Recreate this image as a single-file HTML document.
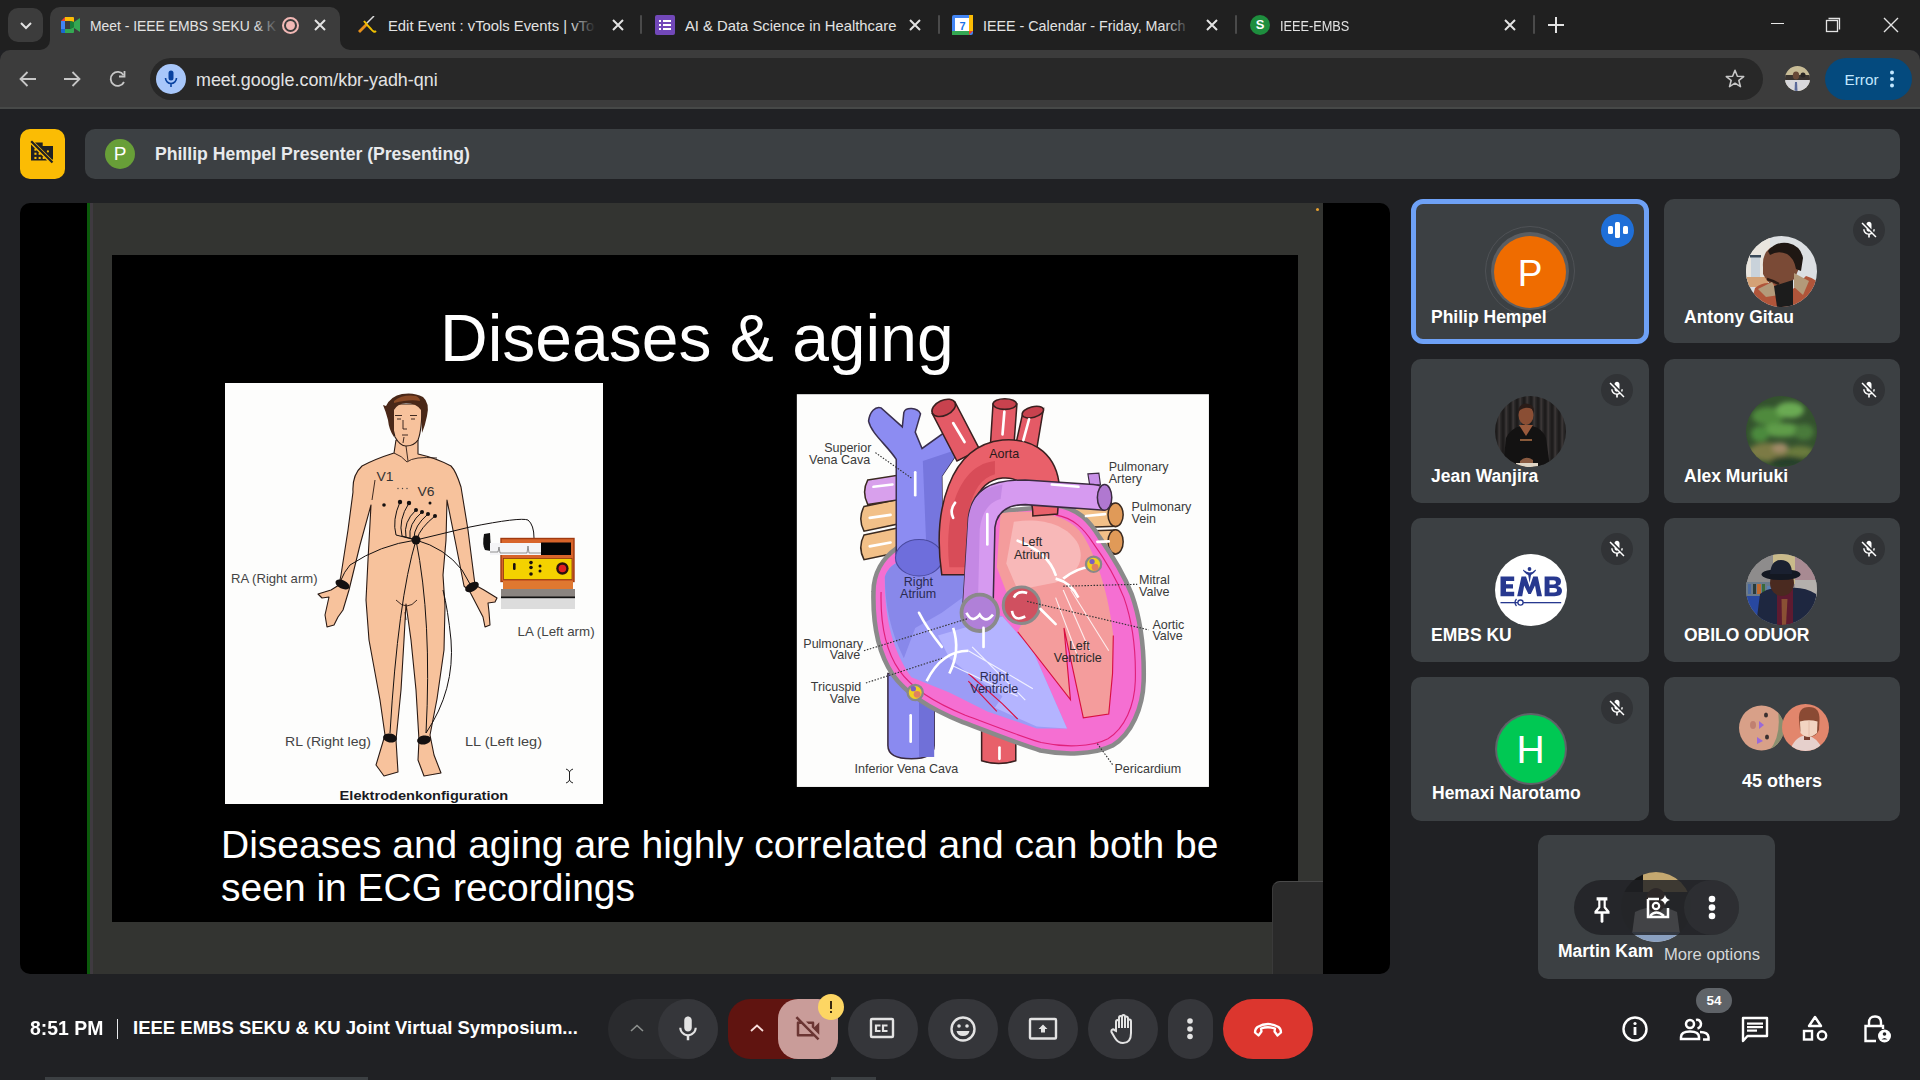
<!DOCTYPE html>
<html><head><meta charset="utf-8">
<style>
*{box-sizing:border-box}
html,body{margin:0;padding:0}
body{width:1920px;height:1080px;position:relative;overflow:hidden;background:#202124;font-family:"Liberation Sans",sans-serif;color:#e3e3e3}
.a{position:absolute}
.tabt{position:absolute;top:17px;font-size:14.8px;color:#e3e3e3;white-space:nowrap;line-height:18px}
.sep{position:absolute;top:15px;width:2px;height:19px;background:#4a4a4a;border-radius:1px}
.tile{position:absolute;background:#3c4043;border-radius:10px;overflow:hidden}
.nm{position:absolute;left:20px;font-weight:700;font-size:17.5px;color:#fff;white-space:nowrap;line-height:20px}
.mute{position:absolute;width:32px;height:32px;border-radius:50%;background:#313336}
.btn{position:absolute;top:999px;height:60px;border-radius:30px;background:#3c4043}
</style></head><body>

<!-- TAB STRIP -->
<div class="a" style="left:0;top:0;width:1920px;height:50px;background:#202020"></div>
<div class="a" style="left:8px;top:8px;width:35px;height:34px;border-radius:10px;background:#3c3c3c"></div>
<svg class="a" style="left:17px;top:17px" width="18" height="16" viewBox="0 0 18 16"><path d="M4 6 L9 11 L14 6" fill="none" stroke="#e3e3e3" stroke-width="2"/></svg>

<!-- active tab -->
<div class="a" style="left:50px;top:7px;width:290px;height:50px;border-radius:10px 10px 0 0;background:#3c3c3c"></div>
<div class="a" style="left:40px;top:40px;width:10px;height:10px;background:#3c3c3c"></div>
<div class="a" style="left:40px;top:40px;width:10px;height:10px;border-radius:0 0 10px 0;background:#202020"></div>
<div class="a" style="left:340px;top:40px;width:10px;height:10px;background:#3c3c3c"></div>
<div class="a" style="left:340px;top:40px;width:10px;height:10px;border-radius:0 0 0 10px;background:#202020"></div>

<!-- Meet icon -->
<svg class="a" style="left:61px;top:17px" width="19" height="16" viewBox="0 0 19 16">
<path d="M0 4 L4 0 L4 4 Z" fill="#ea4335"/>
<rect x="0" y="4" width="4" height="8" fill="#4285f4"/>
<path d="M0 12 L4 12 L4 16 L1 16 Q0 16 0 15Z" fill="#1967d2"/>
<path d="M4 0 L12 0 Q13 0 13 1 L13 5 L9 4 L4 4Z" fill="#fbbc04"/>
<path d="M4 12 L9 12 L13 10 L13 15 Q13 16 12 16 L4 16Z" fill="#34a853"/>
<path d="M9 4 L13 5 L13 10 L9 12Z" fill="#188038"/>
<path d="M13 5 L19 1 L19 15 L13 11Z" fill="#34a853"/>
</svg>
<div class="tabt" style="left:90px;width:190px;overflow:hidden;font-size:13.9px">Meet - IEEE EMBS SEKU &amp; K</div>
<div class="a" style="left:255px;top:10px;width:30px;height:30px;background:linear-gradient(90deg,rgba(60,60,60,0),#3c3c3c 80%)"></div>
<div class="a" style="left:282px;top:17px;width:17px;height:17px;border-radius:50%;border:2px solid #f2b8b5"></div>
<div class="a" style="left:286px;top:21px;width:9px;height:9px;border-radius:50%;background:#f2b8b5"></div>
<svg class="a" style="left:313px;top:18px" width="14" height="14" viewBox="0 0 14 14"><path d="M2 2 L12 12 M12 2 L2 12" stroke="#e3e3e3" stroke-width="2"/></svg>

<!-- tab 2 -->
<svg class="a" style="left:357px;top:16px" width="21" height="19" viewBox="0 0 21 19">
<path d="M1 15 L9 7 L11 9 L3 17 Z" fill="#e8901a"/>
<path d="M9 8 L17 0" stroke="#ddd" stroke-width="1.5"/>
<path d="M7 5 Q10 9 14 13 Q17 17 19 15" fill="none" stroke="#f0c000" stroke-width="2"/>
</svg>
<div class="tabt" style="left:388px;width:208px;overflow:hidden">Edit Event : vTools Events | vTools</div>
<div class="a" style="left:570px;top:10px;width:30px;height:30px;background:linear-gradient(90deg,rgba(32,32,32,0),#202020 85%)"></div>
<svg class="a" style="left:611px;top:18px" width="14" height="14" viewBox="0 0 14 14"><path d="M2 2 L12 12 M12 2 L2 12" stroke="#e3e3e3" stroke-width="2"/></svg>
<div class="sep" style="left:640px"></div>

<!-- tab 3 -->
<div class="a" style="left:655px;top:15px;width:20px;height:20px;border-radius:2px;background:#7248b9"></div>
<svg class="a" style="left:658px;top:18px" width="14" height="14" viewBox="0 0 14 14"><g fill="#fff"><rect x="1" y="2" width="2" height="2"/><rect x="5" y="2" width="8" height="2"/><rect x="1" y="6" width="2" height="2"/><rect x="5" y="6" width="8" height="2"/><rect x="1" y="10" width="2" height="2"/><rect x="5" y="10" width="8" height="2"/></g></svg>
<div class="tabt" style="left:685px">AI &amp; Data Science in Healthcare</div>
<svg class="a" style="left:908px;top:18px" width="14" height="14" viewBox="0 0 14 14"><path d="M2 2 L12 12 M12 2 L2 12" stroke="#e3e3e3" stroke-width="2"/></svg>
<div class="sep" style="left:938px"></div>

<!-- tab 4 -->
<svg class="a" style="left:952px;top:15px" width="21" height="20" viewBox="0 0 21 20">
<rect x="0" y="0" width="21" height="20" rx="2" fill="#4285f4"/>
<rect x="3" y="3" width="15" height="14" fill="#fff"/>
<rect x="0" y="16" width="18" height="4" fill="#34a853"/>
<rect x="17" y="0" width="4" height="16" fill="#fbbc04"/>
<path d="M17 16 L21 16 L17 20Z" fill="#ea4335"/>
<text x="10.5" y="14.5" font-family="Liberation Sans" font-size="11" fill="#1a73e8" text-anchor="middle" font-weight="700">7</text>
</svg>
<div class="tabt" style="left:983px;width:212px;overflow:hidden;font-size:14.3px">IEEE - Calendar - Friday, March 15</div>
<div class="a" style="left:1165px;top:10px;width:30px;height:30px;background:linear-gradient(90deg,rgba(32,32,32,0),#202020 85%)"></div>
<svg class="a" style="left:1205px;top:18px" width="14" height="14" viewBox="0 0 14 14"><path d="M2 2 L12 12 M12 2 L2 12" stroke="#e3e3e3" stroke-width="2"/></svg>
<div class="sep" style="left:1235px"></div>

<!-- tab 5 -->
<div class="a" style="left:1250px;top:15px;width:20px;height:20px;border-radius:50%;background:#1e8e3e;color:#fff;font-weight:700;font-size:13px;line-height:20px;text-align:center">S</div>
<div class="tabt" style="left:1280px;font-size:14.8px;transform:scaleX(0.86);transform-origin:0 0">IEEE-EMBS</div>
<svg class="a" style="left:1503px;top:18px" width="14" height="14" viewBox="0 0 14 14"><path d="M2 2 L12 12 M12 2 L2 12" stroke="#e3e3e3" stroke-width="2"/></svg>
<div class="sep" style="left:1533px"></div>
<svg class="a" style="left:1547px;top:16px" width="18" height="18" viewBox="0 0 18 18"><path d="M9 1 V17 M1 9 H17" stroke="#e3e3e3" stroke-width="2"/></svg>

<!-- window controls -->
<div class="a" style="left:1771px;top:23px;width:13px;height:1px;background:#e8e8e8"></div>
<svg class="a" style="left:1825px;top:17px" width="16" height="16" viewBox="0 0 16 16"><path d="M3.5 1.5 H14.5 V12.5" fill="none" stroke="#e3e3e3" stroke-width="1.3"/><rect x="1.5" y="3.5" width="11" height="11" fill="none" stroke="#e3e3e3" stroke-width="1.3"/></svg>
<svg class="a" style="left:1882px;top:16px" width="18" height="18" viewBox="0 0 18 18"><path d="M2 2 L16 16 M16 2 L2 16" stroke="#e3e3e3" stroke-width="1.4"/></svg>

<!-- TOOLBAR -->
<div class="a" style="left:0;top:50px;width:1920px;height:59px;background:#3c3c3c;border-radius:10px 10px 0 0"></div>
<div class="a" style="left:0;top:107px;width:1920px;height:2px;background:#474948"></div>
<svg class="a" style="left:18px;top:69px" width="20" height="20" viewBox="0 0 20 20"><path d="M18 10 H3 M9.5 3 L2.5 10 L9.5 17" fill="none" stroke="#c7c7c7" stroke-width="1.8"/></svg>
<svg class="a" style="left:62px;top:69px" width="20" height="20" viewBox="0 0 20 20"><path d="M2 10 H17 M10.5 3 L17.5 10 L10.5 17" fill="none" stroke="#c7c7c7" stroke-width="1.8"/></svg>
<svg class="a" style="left:108px;top:70px" width="20" height="18" viewBox="0 0 20 18"><path d="M15.5 5 A7 7 0 1 0 16 12" fill="none" stroke="#c7c7c7" stroke-width="1.8"/><path d="M16.5 1 V6.5 H11" fill="none" stroke="#c7c7c7" stroke-width="1.8"/></svg>

<div class="a" style="left:150px;top:58px;width:1613px;height:42px;border-radius:21px;background:#282828"></div>
<div class="a" style="left:156px;top:64px;width:30px;height:30px;border-radius:50%;background:#a8c7fa"></div>
<svg class="a" style="left:162px;top:69px" width="18" height="20" viewBox="0 0 18 20"><rect x="6.5" y="1.5" width="5" height="10" rx="2.5" fill="#0842a0"/><path d="M3.5 9 A5.5 5.5 0 0 0 14.5 9 M9 14.5 V18" fill="none" stroke="#0842a0" stroke-width="1.6"/></svg>
<div class="a" style="left:196px;top:69.5px;font-size:17.9px;color:#e3e3e3;white-space:nowrap;line-height:20px">meet.google.com/kbr-yadh-qni</div>
<svg class="a" style="left:1724px;top:68px" width="22" height="22" viewBox="0 0 24 24"><path d="M12 2.5 L14.6 9 L21.5 9.3 L16.2 13.6 L18 20.4 L12 16.6 L6 20.4 L7.8 13.6 L2.5 9.3 L9.4 9 Z" fill="none" stroke="#c7c7c7" stroke-width="1.7" stroke-linejoin="round"/></svg>
<svg class="a" style="left:1785px;top:66px" width="25" height="25" viewBox="0 0 25 25"><defs><clipPath id="pa"><circle cx="12.5" cy="12.5" r="12.5"/></clipPath></defs><g clip-path="url(#pa)"><rect width="25" height="25" fill="#c8bc96"/><rect x="0" y="9" width="25" height="6" fill="#3a3430"/><rect x="0" y="14" width="25" height="11" fill="#d8d8dc"/><ellipse cx="11" cy="9.5" rx="3.2" ry="4" fill="#6a4a38"/><path d="M10,16 L12,16 L12.5,25 L9.5,25Z" fill="#5a6a9a"/><circle cx="18" cy="9" r="2.5" fill="#2a2624"/></g></svg>
<div class="a" style="left:1825px;top:58px;width:87px;height:42px;border-radius:21px;background:#044a7e"></div>
<div class="a" style="left:1844.5px;top:70px;font-size:15.3px;color:#c2e7ff;line-height:20px">Error</div>
<svg class="a" style="left:1887.5px;top:69px" width="8" height="20" viewBox="0 0 8 20"><circle cx="4" cy="3.5" r="2" fill="#c2e7ff"/><circle cx="4" cy="10" r="2" fill="#c2e7ff"/><circle cx="4" cy="16.5" r="2" fill="#c2e7ff"/></svg>

<!-- MEET TOP BAR -->
<div class="a" style="left:20px;top:129px;width:45px;height:50px;border-radius:10px;background:#fbbc04"></div>
<svg class="a" style="left:30px;top:140px" width="24" height="24" viewBox="0 0 24 24"><path d="M1,4.5 L1,20.5 L17,20.5Z" fill="#202124"/><path d="M5,2.5 L12.7,2.5 L12.7,6 L23,6 L23,19.5 L22,19.5Z" fill="#202124"/><path d="M1.2,1.2 L22.5,22.5" stroke="#202124" stroke-width="2.2"/><g fill="#fbbc04"><rect x="4.4" y="8.6" width="2.1" height="2.1"/><rect x="4.4" y="12.7" width="2.1" height="2.1"/><rect x="8.6" y="12.7" width="2.1" height="2.1"/><rect x="4.4" y="16.9" width="2.1" height="2.1"/><rect x="8.6" y="16.9" width="2.1" height="2.1"/><rect x="12.7" y="16.9" width="2.1" height="2.1"/><circle cx="17.9" cy="11.4" r="1.1"/></g></svg>
<div class="a" style="left:85px;top:129px;width:1815px;height:50px;border-radius:10px;background:#3c4043"></div>
<div class="a" style="left:105px;top:139px;width:30px;height:30px;border-radius:50%;background:#689f38;color:#fff;font-size:19px;line-height:30px;text-align:center">P</div>
<div class="a" style="left:155px;top:144px;font-size:17.6px;font-weight:700;color:#e8eaed;white-space:nowrap;line-height:20px">Phillip Hempel Presenter (Presenting)</div>

<!-- VIDEO AREA -->
<div class="a" id="video" style="left:20px;top:203px;width:1370px;height:771px;border-radius:10px;background:#000;overflow:hidden">
  <div class="a" style="left:67px;top:0;width:3px;height:771px;background:#0b5a0b"></div>
  <div class="a" style="left:70px;top:0;width:3px;height:771px;background:#3f3a40"></div>
  <div class="a" style="left:73px;top:0;width:1230px;height:771px;background:#333431"></div>
  <div class="a" style="left:1296px;top:5px;width:3px;height:3px;border-radius:50%;background:#e8a030"></div>
  <!-- slide -->
  <div class="a" id="slide" style="left:92px;top:52px;width:1186px;height:667px;background:#000"></div>
  <div class="a" style="left:1252px;top:678px;width:51px;height:93px;border-radius:8px 0 0 0;background:#2a2a2a;border-top:1px solid #4a4a4a;border-left:1px solid #3a3a3a"></div>
</div>

<!-- slide content (absolute page coords) -->
<div class="a" style="left:440px;top:298px;font-size:66px;color:#fff;white-space:nowrap;line-height:80px">Diseases &amp; aging</div>
<div class="a" style="left:221px;top:823px;font-size:39px;color:#fff;white-space:nowrap;line-height:43px">Diseases and aging are highly correlated and can both be<br>seen in ECG recordings</div>

<svg class="a" style="left:225px;top:383px" width="378" height="421" viewBox="225 383 378 421">
<rect x="225" y="383" width="378" height="421" fill="#fdfdfc"/>
<g stroke="#2a1a14" stroke-width="1.1" stroke-linejoin="round">
<path fill="#f7c29c" d="M396,440 L394,453 Q375,459 362,466 Q352,475 353,492 L348,530 L341,575 L339,585 L331,590 L318,594 L322,598 L329,597 L325,615 L327,627 L334,625 L338,617 L343,610 L349,590 L360,545 L371,505 L368,560 L366,600 L369,640 L380,700 L385,735 L376,765 L384,776 L398,772 L396,740 L401,690 L404,640 L406,604 L411,640 L416,690 L419,740 L418,760 L424,776 L441,773 L434,755 L430,735 L437,699 L444,650 L445,606 L443,575 L446,540 L447,500 L455,540 L464,586 L470,592 L483,617 L485,627 L490,625 L489,612 L488,603 L495,602 L497,598 L484,590 L475,585 L468,530 L461,487 Q456,471 451,466 Q436,458 418,454 L418,440 Z"/>
<path fill="#f7c29c" d="M393,404 Q391,425 395,437 Q400,446 406,446 Q414,446 418,440 Q422,430 422,404 Z"/>
</g>
<path fill="#4a2818" d="M386,406 Q391,396 402,394 Q414,392 423,397 Q430,403 427,416 Q425,426 422,433 L421,410 Q416,403 406,403 Q397,404 394,410 L394,437 Q389,430 388,420 Q386,412 383,405Z"/><path fill="#8a4a26" d="M394,401 Q403,394 416,396 Q420,398 420,401 Q410,399 394,403Z"/>
<g stroke="#2a1a14" stroke-width="0.9" fill="none">
<path d="M395,415.5 L402,415.5 M410,415.5 L417,415.5 M397,419 L401,419 M411,419 L415,419 M403,420 L403,429 L407,429 M402,435 L408,435 M404,437 L403,443"/>
<path d="M394,453 Q402,456 407,462 Q414,456 437,458 M406,446 L408,461"/>
<path d="M396,600 Q407,612 417,600 M405,612 L406,620"/>
<path d="M375,480 L372,500"/>
</g>
<g fill="#141010">
<ellipse cx="342.5" cy="584.5" rx="7.5" ry="4.2" transform="rotate(25 342.5 584.5)"/>
<ellipse cx="472" cy="587" rx="7.5" ry="4.2" transform="rotate(-30 472 587)"/>
<ellipse cx="390" cy="738" rx="7" ry="4.5" transform="rotate(10 390 738)"/>
<ellipse cx="424" cy="740" rx="7" ry="4.5" transform="rotate(-10 424 740)"/>
<circle cx="416" cy="540" r="4.5"/>
<circle cx="384" cy="505" r="1.8"/><circle cx="400" cy="502" r="2.2"/><circle cx="409" cy="503" r="2.2"/>
<circle cx="416" cy="510" r="2"/><circle cx="422" cy="512" r="2"/><circle cx="428" cy="514" r="2"/><circle cx="435" cy="516" r="2"/><circle cx="430" cy="503" r="1.5"/>
</g>
<g stroke="#141010" stroke-width="1" fill="none">
<path d="M400,502 Q392,520 396,535 L416,540"/>
<path d="M409,503 Q398,520 402,536 L416,540"/>
<path d="M416,510 Q403,522 406,537"/>
<path d="M422,512 Q408,524 410,538"/>
<path d="M428,514 Q414,526 414,538"/>
<path d="M435,516 Q420,528 417,539"/>
<path d="M416,540 Q380,545 350,565 Q344,572 341,580"/>
<path d="M416,540 Q445,548 462,570 L470,584"/>
<path d="M416,540 Q398,600 390,733"/>
<path d="M416,540 Q432,620 426,733"/>
<path d="M416,540 L470,527 Q520,517 528,520 Q534,525 534,538"/>
<path d="M426,733 Q455,690 451,640 Q448,610 443,590"/>
</g>
<path d="M484,534 L490,533 L491,551 L485,550 Q482,545 484,534Z" fill="#111"/>
<rect x="501" y="538.5" width="73" height="43" fill="#d8642a" stroke="#a03a10" stroke-width="1.4"/>
<rect x="490" y="543" width="51" height="12" fill="#f4f4f6"/>
<path d="M490,552 L498,552 L499,547 L500,553 L520,553 L527,553 L528,546 L529,553 L541,553" stroke="#666" stroke-width="0.7" fill="none"/>
<rect x="541" y="542.5" width="30" height="12.5" fill="#050505"/>
<rect x="503.5" y="558.5" width="68.5" height="21" fill="#f4d200" stroke="#8a3a10" stroke-width="0.8"/>
<rect x="503" y="581" width="70" height="9" fill="#e07830"/>
<rect x="501" y="589" width="74" height="8" fill="#8a8480"/>
<rect x="501" y="596.5" width="74" height="2" fill="#111"/>
<rect x="501" y="598.5" width="74" height="10.5" fill="#dcdcdc"/>
<g fill="#1a1010"><circle cx="531" cy="562.6" r="1.8"/><circle cx="531" cy="567.5" r="1.8"/><circle cx="531" cy="574" r="1.8"/><circle cx="540" cy="566" r="1.5"/><circle cx="540" cy="571" r="1.5"/><rect x="513" y="563" width="2.6" height="7" rx="1.2"/></g>
<circle cx="562.4" cy="568.5" r="6.2" fill="#2a1010"/><circle cx="562.4" cy="568.5" r="3.8" fill="#e02020"/>
<g font-family="Liberation Sans" fill="#444" font-size="12.4">
<text x="231" y="582.5" textLength="86.5" lengthAdjust="spacingAndGlyphs">RA (Right arm)</text>
<text x="285" y="746.3" textLength="86" lengthAdjust="spacingAndGlyphs">RL (Right leg)</text>
<text x="517.6" y="636.4" textLength="77" lengthAdjust="spacingAndGlyphs">LA (Left arm)</text>
<text x="465" y="746.3" textLength="77" lengthAdjust="spacingAndGlyphs">LL (Left leg)</text>
</g>
<text x="339.6" y="799.6" font-family="Liberation Sans" font-weight="700" font-size="12.6" fill="#1a1a22" textLength="168.7" lengthAdjust="spacingAndGlyphs">Elektrodenkonfiguration</text>
<g font-family="Liberation Sans" fill="#333" font-size="13">
<text x="376.5" y="481" textLength="17" lengthAdjust="spacingAndGlyphs">V1</text>
<text x="417.5" y="496" textLength="17" lengthAdjust="spacingAndGlyphs">V6</text>
</g>
<g fill="#444"><circle cx="398" cy="488.5" r="0.7"/><circle cx="402.5" cy="488.5" r="0.7"/><circle cx="407" cy="488.5" r="0.7"/></g>
<path d="M566,769 Q569,770 569.5,772 Q570,770 573,769 M569.5,772 V780 M566,783 Q569,782 569.5,780 Q570,782 573,783" stroke="#222" stroke-width="1" fill="none"/>
</svg>

<svg class="a" style="left:790px;top:385px" width="425" height="410" viewBox="0 0 1120 1080">
<rect x="18" y="24" width="1086" height="1035" fill="#fdfdfc"/>
<g stroke="#3a2a20" stroke-width="4">
<path d="M195,320 L290,300 L290,365 L195,385 Q178,352 195,320Z" fill="#f2c088"/>
<path d="M195,395 L290,375 L290,440 L195,460 Q178,428 195,395Z" fill="#f2c088"/>
<path d="M205,250 L300,235 L300,300 L205,315 Q188,282 205,250Z" fill="#d8a0ec"/>
<path d="M700,318 L858,312 L858,372 L700,378Z" fill="#f2c088"/>
<ellipse cx="858" cy="342" rx="20" ry="31" fill="#e09a58"/>
<path d="M760,385 L858,382 L858,445 L760,450Z" fill="#f2c088"/>
<ellipse cx="858" cy="413" rx="20" ry="32" fill="#e09a58"/>
</g>
<path d="M258,760 L380,760 L380,950 Q380,985 320,985 Q258,985 258,950Z" fill="#8a8af0" stroke="#3a2a40" stroke-width="4"/>
<rect x="340" y="760" width="40" height="220" fill="#7070d8"/>
<path d="M505,880 L595,880 L595,990 Q550,1005 505,990Z" fill="#e8606a" stroke="#3a2020" stroke-width="4"/>
<!-- heart body -->
<path d="M281,430 C245,455 220,495 220,545 C218,630 232,705 270,762 C310,820 390,862 455,888 C520,912 600,945 660,963 C720,975 800,975 850,950 C900,920 930,850 932,780 C934,700 925,620 900,550 C880,500 850,450 815,400 C790,360 760,325 705,318 L560,332 C500,342 470,380 455,420 Z" fill="#f56fd2" stroke="#8a8a8a" stroke-width="12"/>
<path d="M240,545 C238,625 252,700 288,752 C325,805 400,845 462,870 C525,893 605,925 662,942 C720,955 795,955 838,932 C882,905 908,845 910,780 C912,700 903,625 880,560 C860,510 832,462 798,415 C775,380 748,350 700,342" fill="none" stroke="#e0207a" stroke-width="3"/>
<!-- blue right atrium/ventricle -->
<path d="M250,505 C265,460 320,445 420,445 L470,460 L470,575 L560,610 L640,700 L730,905 L650,905 L520,860 L420,810 L320,770 C270,700 248,610 250,505Z" fill="#9c9cf6"/>
<path d="M250,505 C265,460 320,445 420,445 L460,455 L455,560 L400,600 L330,640 L300,720 C265,650 250,580 250,505Z" fill="#8888ea"/>
<path d="M390,660 L560,610 L640,700 L730,905 L650,900 L540,850 L560,820 L470,760 L420,720Z" fill="#b4b4ff"/>
<!-- salmon left chambers -->
<path d="M555,338 C650,325 740,340 775,400 C810,460 840,550 852,660 L850,760 L840,867 L773,877 L722,640 L739,829 L600,650 L625,600 L580,570 L545,480 Z" fill="#f49c9c"/>
<path d="M590,360 C660,350 730,365 760,420 C780,470 750,500 700,520 L600,540 L570,470Z" fill="#f8b8b8"/>
<g stroke="#d81040" stroke-width="3" fill="none">
<path d="M600,650 L739,829 L722,640 L773,877 L840,867 L850,760 L852,660"/>
<path d="M545,860 L470,780"/>
<path d="M470,760 L560,840 L600,880"/>
</g>
<!-- SVC -->
<path d="M207,95 C210,70 225,55 240,60 L296,110 L300,72 C305,58 335,58 344,76 L330,124 L348,167 L425,112 C445,115 465,125 468,138 L449,167 L400,240 L402,445 L280,445 L280,196 C258,160 215,130 207,95Z" fill="#8c8cf2" stroke="#3a3050" stroke-width="4"/>
<path d="M350,200 L449,167 L400,240 L402,445 L360,445Z" fill="#7676de"/>
<ellipse cx="340" cy="455" rx="62" ry="48" fill="#6e6edc" stroke="#4a4aa0" stroke-width="3"/>
<!-- aorta -->
<g stroke="#3a2020" stroke-width="4">
<path d="M375,75 L435,45 L500,170 L440,200Z" fill="#e45a66"/>
<ellipse cx="405" cy="60" rx="33" ry="20" transform="rotate(-25 405 60)" fill="#c8424e"/>
<path d="M535,50 L598,50 L590,160 L528,160Z" fill="#e45a66"/>
<ellipse cx="566" cy="50" rx="31" ry="14" fill="#c8424e"/>
<path d="M612,80 L668,62 L650,170 L592,170Z" fill="#e45a66"/>
<ellipse cx="640" cy="71" rx="29" ry="14" transform="rotate(-15 640 71)" fill="#c8424e"/>
<path d="M400,500 C375,330 420,160 560,145 C650,138 705,190 710,270 L705,340 L640,345 C640,280 610,240 560,245 C490,252 460,330 468,500Z" fill="#e9606a"/>
</g>
<path d="M420,480 C405,350 440,210 540,200 L540,235 C480,250 455,340 468,480Z" fill="#d84c58"/>
<!-- pulmonary artery -->
<path d="M785,234 L814,232 L818,262 L790,265Z" fill="#c890e8" stroke="#3a2a40" stroke-width="3"/>
<path d="M455,595 L470,350 C480,275 525,250 620,250 L800,262 C820,264 830,270 832,280 L829,330 L620,315 C570,315 545,335 540,375 L535,595Z" fill="#d69af0" stroke="#3a2a40" stroke-width="4"/>
<path d="M470,350 C480,290 510,270 560,262 L555,300 C520,310 505,340 500,380 L495,590 L455,595Z" fill="#c488e4"/>
<ellipse cx="829" cy="296" rx="19" ry="34" fill="#b078d0" stroke="#3a2a40" stroke-width="4"/>
<!-- valves -->
<circle cx="500" cy="600" r="48" fill="#b080d8" stroke="#8a8a8a" stroke-width="10"/>
<circle cx="610" cy="580" r="48" fill="#d05060" stroke="#8a8a8a" stroke-width="8"/>
<g stroke="#fff" stroke-width="7" fill="none">
<path d="M465,600 Q480,630 500,605 Q515,630 535,605"/>
<path d="M590,560 Q600,540 625,548 M585,595 Q590,625 620,610"/>
<path d="M430,640 Q450,700 420,760 M360,780 Q400,700 470,700"/>
<path d="M700,510 Q740,520 760,560 M720,510 Q760,480 790,480"/>
</g>
<g stroke="#fff" stroke-width="3" opacity="0.8">
<path d="M470,700 L640,800 M480,690 L620,830 M430,740 L600,820"/>
<path d="M720,540 L790,700 M740,540 L840,700 M700,560 L760,720"/>
</g>
<g stroke="#fff" stroke-width="7" fill="none" stroke-linecap="round">
<path d="M330,230 L330,290"/><path d="M435,310 Q420,330 430,350"/>
<path d="M520,340 L520,420"/><path d="M510,640 L510,690"/><path d="M318,870 L318,940"/>
<path d="M690,262 L760,268"/><path d="M220,268 L270,262"/><path d="M210,350 L265,342"/><path d="M210,425 L265,415"/>
<path d="M780,345 L830,340"/><path d="M810,413 L840,412"/>
<path d="M430,100 L460,150"/><path d="M565,70 L560,130"/><path d="M630,90 L615,145"/>
<path d="M340,600 Q360,640 400,690"/><path d="M600,410 Q680,440 700,500"/><path d="M660,590 L700,630"/>
<path d="M552,985 L552,955"/>
</g>
<circle cx="330" cy="810" r="20" fill="#f0d020" stroke="#888" stroke-width="6"/><circle cx="335" cy="815" r="9" fill="#e08060"/><circle cx="325" cy="800" r="7" fill="#7a60c0"/>
<circle cx="800" cy="472" r="20" fill="#f0d020" stroke="#888" stroke-width="6"/><circle cx="804" cy="480" r="9" fill="#e08060"/><circle cx="796" cy="465" r="7" fill="#7a60c0"/>
<g stroke="#333" stroke-width="3" stroke-dasharray="4 4" fill="none">
<path d="M225,178 L320,245"/><path d="M195,700 L470,615"/><path d="M200,785 L400,720"/>
<path d="M720,530 L915,525"/><path d="M625,570 L945,645"/><path d="M810,945 L850,1000"/>
</g>
<g font-family="Liberation Sans" font-size="33" fill="#3a3a3a">
<text x="90" y="176">Superior</text><text x="50" y="208">Vena Cava</text>
<text x="525" y="193" fill="#2a1a1a">Aorta</text>
<text x="840" y="226">Pulmonary</text><text x="840" y="258">Artery</text>
<text x="900" y="332">Pulmonary</text><text x="900" y="364">Vein</text>
<text x="610" y="425" fill="#2a2a2a">Left</text><text x="590" y="459" fill="#2a2a2a">Atrium</text>
<text x="300" y="530" fill="#2a2a50">Right</text><text x="290" y="562" fill="#2a2a50">Atrium</text>
<text x="920" y="523">Mitral</text><text x="920" y="555">Valve</text>
<text x="955" y="642">Aortic</text><text x="955" y="673">Valve</text>
<text x="35" y="692">Pulmonary</text><text x="105" y="723">Valve</text>
<text x="735" y="698" fill="#2a2a2a">Left</text><text x="695" y="730" fill="#2a2a2a">Ventricle</text>
<text x="55" y="807">Tricuspid</text><text x="105" y="838">Valve</text>
<text x="500" y="780" fill="#2a2a50">Right</text><text x="475" y="812" fill="#2a2a50">Ventricle</text>
<text x="170" y="1022">Inferior Vena Cava</text>
<text x="855" y="1022">Pericardium</text>
</g>
</svg>


<!-- PARTICIPANTS -->

<!-- Tile 1 Philip -->
<div class="tile" style="left:1411px;top:199px;width:238px;height:145px;border:5px solid #6ea1f6;border-radius:12px"></div>
<div class="a" style="left:1485px;top:226px;width:90px;height:90px;border-radius:50%;border:1px solid #4f5256"></div>
<div class="a" style="left:1491px;top:232px;width:78px;height:78px;border-radius:50%;background:#5a5d61"></div>
<div class="a" style="left:1494px;top:235.5px;width:72px;height:72px;border-radius:50%;background:#ef6c00;color:#fff;font-size:37px;line-height:76px;text-align:center">P</div>
<div class="a" style="left:1601px;top:214px;width:33px;height:33px;border-radius:50%;background:#1f6fd8"></div>
<div class="a" style="left:1608px;top:226px;width:5px;height:8px;border-radius:1.5px;background:#fff"></div>
<div class="a" style="left:1615px;top:222px;width:5px;height:16px;border-radius:1.5px;background:#fff"></div>
<div class="a" style="left:1623px;top:226px;width:5px;height:8px;border-radius:1.5px;background:#fff"></div>
<div class="nm" style="left:1431px;top:307.0px">Philip Hempel</div>

<!-- Tile 2 Antony -->
<div class="tile" style="left:1664px;top:199px;width:236px;height:144px"></div>
<svg class="a" style="left:1746px;top:235.5px" width="71" height="71" viewBox="0 0 71 71">
<defs><clipPath id="c1"><circle cx="35.5" cy="35.5" r="35.5"/></clipPath></defs>
<g clip-path="url(#c1)">
<rect width="71" height="71" fill="#dcdfe2"/>
<rect x="0" y="0" width="24" height="46" fill="#e9e5de"/>
<rect x="5" y="20" width="9" height="23" fill="#c9d2da"/>
<rect x="4" y="19" width="11" height="2.5" fill="#3a4a5a"/>
<rect x="0" y="41" width="22" height="10" fill="#d4a276"/>
<path d="M17,31 Q16,18 24,12 Q34,7 46,12 Q55,18 54,30 L51,37 Q48,46 40,50 Q30,53 24,48 Q19,42 17,38 Z" fill="#7a4a36"/>
<path d="M22,15 Q30,5 42,7 Q55,10 57,22 L55,35 L50,33 Q48,22 41,18 Q32,14 24,19 Z" fill="#1f1713"/>
<path d="M21,43 Q28,45 33,48" stroke="#2a1a14" stroke-width="2.5" fill="none"/>
<path d="M4,71 L9,52 Q18,45 28,48 L44,56 L60,40 Q68,42 74,48 L74,71 Z" fill="#b0553a"/>
<path d="M12,53 L26,46 L33,59 L20,61Z" fill="#b39a7a"/>
<path d="M48,37 L63,45 L57,59 L48,51Z" fill="#b39a7a"/>
<path d="M28,50 L47,44 L47,71 L31,71Z" fill="#1c1c1c"/>
</g></svg>
<div class="mute" style="left:1853px;top:214px"></div>
<svg class="a" style="left:1859px;top:220px" width="20" height="20" viewBox="0 0 24 24"><path fill="#fff" d="M19 11h-1.7c0 .74-.16 1.43-.43 2.05l1.23 1.23c.56-.98.9-2.09.9-3.28zm-4.02.17c0-.06.02-.11.02-.17V5c0-1.66-1.34-3-3-3S9 3.34 9 5v.18l5.98 5.99zM4.27 3L3 4.27l6.01 6.01V11c0 1.66 1.33 3 2.99 3 .22 0 .44-.03.65-.08l1.66 1.66c-.71.33-1.5.52-2.31.52-2.76 0-5.3-2.1-5.3-5.1H5c0 3.41 2.72 6.23 6 6.72V21h2v-3.28c.91-.13 1.77-.45 2.54-.9L19.73 21 21 19.730z"/></svg>
<div class="nm" style="left:1684px;top:307.0px">Antony Gitau</div>

<!-- Tile 3 Jean -->
<div class="tile" style="left:1411px;top:359px;width:238px;height:144px"></div>
<svg class="a" style="left:1494.5px;top:395.5px" width="71" height="71" viewBox="0 0 71 71">
<defs><clipPath id="c2"><circle cx="35.5" cy="35.5" r="35.5"/></clipPath>
<pattern id="cur" width="7" height="71" patternUnits="userSpaceOnUse"><rect width="7" height="71" fill="#1e1c1c"/><rect x="3" width="2.5" height="71" fill="#3a3535"/><rect x="2.5" width="1" height="71" fill="#2c2a2a"/><rect x="5.5" width="1" height="71" fill="#2c2a2a"/></pattern></defs>
<g clip-path="url(#c2)">
<rect width="71" height="71" fill="url(#cur)"/>
<path d="M8,71 L11,42 Q16,32 26,30 L37,30 Q47,32 51,42 L55,71Z" fill="#131212"/>
<path d="M24,29 L38,29 L31,40Z" fill="#9a5a3c"/>
<ellipse cx="31" cy="19" rx="7.5" ry="10" fill="#8a4e34"/>
<path d="M23,17 Q23,8 31,7.5 Q40,8 39,17 L37,13 Q31,10 25,14Z" fill="#2a1c18"/>
<rect x="25" y="43" width="12" height="2" fill="#8a5a3a"/>
<path d="M25,65 Q31,59 38,64 L38,71 L25,71Z" fill="#8a5a40"/>
<rect x="21" y="67" width="22" height="4" fill="#e0d6c6"/>
</g></svg>
<div class="mute" style="left:1601px;top:374px"></div>
<svg class="a" style="left:1607px;top:380px" width="20" height="20" viewBox="0 0 24 24"><path fill="#fff" d="M19 11h-1.7c0 .74-.16 1.43-.43 2.05l1.23 1.230c.56-.98.9-2.09.9-3.28zm-4.02.17c0-.06.02-.11.02-.17V5c0-1.66-1.34-3-3-3S9 3.34 9 5v.18l5.98 5.99zM4.27 3L3 4.27l6.01 6.01V11c0 1.66 1.33 3 2.99 3 .22 0 .44-.03.65-.08l1.66 1.66c-.71.33-1.5.52-2.31.52-2.76 0-5.3-2.1-5.3-5.1H5c0 3.41 2.72 6.23 6 6.72V21h2v-3.28c.91-.13 1.77-.45 2.54-.9L19.73 21 21 19.73z"/></svg>
<div class="nm" style="left:1431px;top:466.0px">Jean Wanjira</div>

<!-- Tile 4 Alex -->
<div class="tile" style="left:1664px;top:359px;width:236px;height:144px"></div>
<svg class="a" style="left:1746px;top:395.5px" width="71" height="71" viewBox="0 0 71 71">
<defs><clipPath id="c3"><circle cx="35.5" cy="35.5" r="35.5"/></clipPath><filter id="bl3"><feGaussianBlur stdDeviation="2.5"/></filter>
<radialGradient id="g3" cx="45%" cy="35%" r="60%"><stop offset="0" stop-color="#5f9a48"/><stop offset="0.6" stop-color="#3f6a34"/><stop offset="1" stop-color="#2a4228"/></radialGradient></defs>
<g clip-path="url(#c3)">
<rect width="71" height="71" fill="#34522e"/>
<g filter="url(#bl3)">
<ellipse cx="22" cy="20" rx="16" ry="9" fill="#4f8a3e"/>
<ellipse cx="44" cy="14" rx="14" ry="8" fill="#6aaa52"/>
<ellipse cx="36" cy="34" rx="20" ry="7" fill="#5e9c48"/>
<ellipse cx="14" cy="38" rx="9" ry="8" fill="#4c8a3c"/>
<ellipse cx="58" cy="36" rx="10" ry="8" fill="#4a7a3a"/>
<ellipse cx="22" cy="56" rx="20" ry="9" fill="#7c7a44"/>
<ellipse cx="34" cy="52" rx="8" ry="5" fill="#a08a68"/>
<ellipse cx="54" cy="56" rx="14" ry="6" fill="#6a7a3e"/>
<ellipse cx="42" cy="66" rx="18" ry="6" fill="#26402a"/>
</g>
</g></svg>
<div class="mute" style="left:1853px;top:374px"></div>
<svg class="a" style="left:1859px;top:380px" width="20" height="20" viewBox="0 0 24 24"><path fill="#fff" d="M19 11h-1.7c0 .74-.16 1.43-.43 2.05l1.23 1.23c.56-.98.9-2.09.9-3.28zm-4.02.17c0-.06.02-.11.02-.17V5c0-1.66-1.34-3-3-3S9 3.34 9 5v.18l5.98 5.99zM4.27 3L3 4.27l6.01 6.01V11c0 1.66 1.33 3 2.99 3 .22 0 .44-.03.65-.08l1.66 1.66c-.71.33-1.5.52-2.310.52-2.76 0-5.3-2.1-5.3-5.1H5c0 3.41 2.72 6.23 6 6.72V21h2v-3.28c.91-.13 1.77-.45 2.54-.9L19.73 21 21 19.73z"/></svg>
<div class="nm" style="left:1684px;top:466.0px">Alex Muriuki</div>

<!-- Tile 5 EMBS KU -->
<div class="tile" style="left:1411px;top:518px;width:238px;height:144px"></div>
<svg class="a" style="left:1494.5px;top:553.5px" width="72" height="72" viewBox="0 0 72 72">
<circle cx="36" cy="36" r="36" fill="#fff"/>
<g fill="#27388f">
<path d="M5.5,22.5 H19.2 V27 H11 V30.3 H18 V34.5 H11 V37.8 H19.2 V42.2 H5.5Z"/>
<path d="M22.2,42.2 L26.5,22.5 L31,22.5 L34.6,33 L38.2,22.5 L42.7,22.5 L47,42.2 L42,42.2 L40,31.5 L35.8,40 L33.4,40 L29.2,31.5 L27.2,42.2Z"/>
<path fill-rule="evenodd" d="M49.6,22.5 H59 Q66,22.5 66,27.5 Q66,31 62.5,32 Q67,33 67,37 Q67,42.2 59.5,42.2 H49.6Z M54.5,26.3 V30.5 H58.5 Q61,30.5 61,28.4 Q61,26.3 58.5,26.3Z M54.5,34 V38.4 H59 Q62,38.4 62,36.2 Q62,34 59,34Z"/>
<circle cx="34.5" cy="15" r="1.9"/>
<path d="M28.5,15.5 Q31,18.5 34.5,18.5 Q38,18.5 40.5,15.5 L41,16.5 Q38.5,20 36,21 L34.6,29 L33.2,21 Q30.5,20 28,16.5Z"/>
<rect x="5.5" y="48" width="60.7" height="1.3"/>
<path d="M21.5,45 Q18.5,48.5 21.5,52" fill="none" stroke="#27388f" stroke-width="1.3"/>
<circle cx="25.5" cy="48.6" r="2.6" fill="#fff" stroke="#27388f" stroke-width="1.3"/>
</g></svg>
<div class="mute" style="left:1601px;top:533px"></div>
<svg class="a" style="left:1607px;top:539px" width="20" height="20" viewBox="0 0 24 24"><path fill="#fff" d="M19 11h-1.7c0 .74-.16 1.43-.43 2.05l1.23 1.23c.56-.98.9-2.09.9-3.28zm-4.02.17c0-.06.02-.11.02-.17V5c0-1.66-1.34-3-3-3S9 3.34 9 5v.18l5.98 5.99zM4.27 3L3 4.27l6.01 6.01V11c0 1.66 1.33 3 2.99 3 .22 0 .44-.03.65-.08l1.66 1.66c-.71.33-1.5.52-2.31.52-2.76 0-5.3-2.1-5.3-5.1H5c0 3.41 2.72 6.23 6 6.72V21h2v-3.28c.91-.13 1.77-.45 2.54-.9L19.73 21 21 19.73z"/></svg>
<div class="nm" style="left:1431px;top:625.0px">EMBS KU</div>

<!-- Tile 6 OBILO -->
<div class="tile" style="left:1664px;top:518px;width:236px;height:144px"></div>
<svg class="a" style="left:1746px;top:554px" width="71" height="71" viewBox="0 0 71 71">
<defs><clipPath id="c4"><circle cx="35.5" cy="35.5" r="35.5"/></clipPath></defs>
<g clip-path="url(#c4)">
<rect width="71" height="71" fill="#9a9898"/>
<rect x="0" y="0" width="27" height="30" fill="#8e8c8c"/>
<rect x="27" y="0" width="22" height="30" fill="#c9ba8a"/>
<rect x="49" y="0" width="22" height="26" fill="#a88a92"/>
<rect x="49" y="26" width="22" height="20" fill="#b4b0ac"/>
<rect x="0" y="28" width="30" height="14" fill="#6a7a8a"/>
<rect x="2" y="30" width="3" height="10" fill="#4a6aa0"/><rect x="7" y="30" width="3" height="10" fill="#2a3a3a"/><rect x="11" y="30" width="4" height="10" fill="#c06a30"/><rect x="16" y="30" width="3" height="10" fill="#3a6a3a"/><rect x="21" y="32" width="7" height="8" fill="#5a80b0"/>
<rect x="0" y="42" width="18" height="29" fill="#2848a0"/>
<path d="M10,71 L14,40 Q24,32 34,36 Q54,30 70,40 L72,71Z" fill="#1e2740"/>
<path d="M31,37 L47,35 L47,71 L31,71Z" fill="#5e1a30"/>
<path d="M35.5,45 L41.5,45 L40,71 L36,71Z" fill="#8a5034"/>
<ellipse cx="36" cy="29" rx="12" ry="13" fill="#4a2a20"/>
<ellipse cx="35" cy="20.5" rx="19.5" ry="5.5" fill="#141822"/>
<path d="M24,20 Q25,6 35,6 Q46,6 46,20Z" fill="#1a2030"/>
</g></svg>
<div class="mute" style="left:1853px;top:533px"></div>
<svg class="a" style="left:1859px;top:539px" width="20" height="20" viewBox="0 0 24 24"><path fill="#fff" d="M19 11h-1.7c0 .74-.16 1.43-.43 2.05l1.23 1.23c.56-.98.9-2.09.9-3.28zm-4.02.17c0-.06.02-.11.02-.17V5c0-1.66-1.34-3-3-3S9 3.34 9 5v.18l5.98 5.99zM4.27 3L3 4.27l6.01 6.01V11c0 1.66 1.33 3 2.99 3 .22 0 .44-.03.65-.08l1.66 1.66c-.71.33-1.5.52-2.31.52-2.76 0-5.3-2.1-5.3-5.1H5c0 3.41 2.72 6.23 6 6.72V21h2v-3.28c.91-.13 1.77-.45 2.54-.9L19.73 21 21 19.73z"/></svg>
<div class="nm" style="left:1684px;top:625.0px">OBILO ODUOR</div>

<!-- Tile 7 Hemaxi -->
<div class="tile" style="left:1411px;top:677px;width:238px;height:144px"></div>
<div class="a" style="left:1494.5px;top:712.8px;width:72px;height:72px;border-radius:50%;background:#5f6368"></div>
<div class="a" style="left:1496.5px;top:714.8px;width:68px;height:68px;border-radius:50%;background:#00c853;color:#fff;font-size:39px;line-height:70px;text-align:center">H</div>
<div class="mute" style="left:1601px;top:692px"></div>
<svg class="a" style="left:1607px;top:698px" width="20" height="20" viewBox="0 0 24 24"><path fill="#fff" d="M19 11h-1.7c0 .74-.16 1.43-.43 2.05l1.23 1.23c.56-.98.9-2.09.9-3.28zm-4.02.17c0-.06.02-.11.02-.17V5c0-1.66-1.34-3-3-3S9 3.34 9 5v.18l5.98 5.99zM4.27 3L3 4.27l6.01 6.01V11c0 1.66 1.33 3 2.99 3 .22 0 .44-.03.65-.08l1.66 1.66c-.71.33-1.5.52-2.31.52-2.76 0-5.3-2.1-5.3-5.1H5c0 3.41 2.72 6.23 6 6.72V21h2v-3.28c.91-.13 1.77-.45 2.54-.9L19.73 21 21 19.73z"/></svg>
<div class="nm" style="left:1432px;top:783.0px">Hemaxi Narotamo</div>

<!-- Tile 8 45 others -->
<div class="tile" style="left:1664px;top:677px;width:236px;height:144px"></div>
<svg class="a" style="left:1739px;top:705px" width="45" height="46" viewBox="0 0 45 46">
<defs><clipPath id="c5"><circle cx="22.5" cy="23" r="22.5"/></clipPath></defs>
<g clip-path="url(#c5)">
<rect width="45" height="46" fill="#d8a088"/>
<path d="M38 0 L45 0 L45 46 L30 46 Q44 30 38 0Z" fill="#8a9070"/>
<ellipse cx="14" cy="20" rx="3" ry="4" fill="#c08070"/>
<ellipse cx="27" cy="10" rx="2" ry="2.5" fill="#3a3030"/><ellipse cx="28" cy="32" rx="2" ry="2.5" fill="#3a3030"/>
<path d="M20 16 L25 20 L20 24Z" fill="#9a6ad8"/><path d="M18 32 L24 36 L18 39Z" fill="#9a6ad8"/>
</g></svg>
<svg class="a" style="left:1782px;top:704px" width="47" height="47" viewBox="0 0 47 47">
<defs><clipPath id="c6"><circle cx="23.5" cy="23.5" r="23.5"/></clipPath></defs>
<g clip-path="url(#c6)">
<rect width="47" height="47" fill="#e2866c"/>
<path d="M8,47 Q12,33 24,31 Q36,33 41,47Z" fill="#e6d0cc"/>
<path d="M22,30 L28,30 L28,36 L22,36Z" fill="#7a4030"/>
<path d="M17,16 Q16,3 27,3 Q38,3 37.5,16 L37,26 Q34,33 27,33 Q20,33 18,26Z" fill="#8a4a34"/>
<path d="M18,17.5 Q27,15 35.5,17.5 L35,29 Q30,33 27,33 Q22,33 18.5,29Z" fill="#f2d4c2"/>
<path d="M27,17 L27,33" stroke="#e0b8a4" stroke-width="0.8"/>
</g></svg>
<div class="a" style="left:1664px;top:771px;width:236px;text-align:center;font-weight:700;font-size:18px;color:#fff;line-height:20px">45 others</div>

<!-- Tile 9 Martin Kam -->
<div class="tile" style="left:1538px;top:835px;width:237px;height:144px"></div>
<svg class="a" style="left:1621px;top:872px" width="70" height="70" viewBox="0 0 70 70">
<defs><clipPath id="c7"><circle cx="35" cy="35" r="35"/></clipPath></defs>
<g clip-path="url(#c7)">
<rect width="70" height="70" fill="#3a3a3a"/>
<rect x="22" y="0" width="48" height="20" fill="#c4a870"/>
<rect x="0" y="0" width="22" height="20" fill="#141414"/>
<path d="M10 70 L14 40 Q35 30 56 40 L60 70Z" fill="#dadada"/>
<rect x="0" y="60" width="70" height="10" fill="#8aa0c0"/>
<ellipse cx="35" cy="28" rx="10" ry="12" fill="#6a4a3a"/>
</g></svg>
<div class="a" style="left:1574px;top:880px;width:165px;height:55px;border-radius:28px;background:rgba(32,33,36,0.82)"></div>
<div class="a" style="left:1684px;top:880px;width:55px;height:55px;border-radius:50%;background:rgba(60,64,67,0.35)"></div>
<svg class="a" style="left:1589px;top:895px" width="26" height="28" viewBox="0 0 24 26"><path fill="#fff" d="M7 2 H17 V5 H15.5 V11 L19 15 V17.5 H13.3 V25 L12 26 L10.7 25 V17.5 H5 V15 L8.5 11 V5 H7Z M10.5 5 V11.8 L8 15 H16 L13.5 11.8 V5Z" fill-rule="evenodd"/></svg>
<svg class="a" style="left:1644px;top:893px" width="28" height="28" viewBox="0 0 28 28"><path d="M4 6 H15 M4 6 V24 H24 V15" fill="none" stroke="#fff" stroke-width="2.5"/><circle cx="12" cy="13" r="3.2" fill="none" stroke="#fff" stroke-width="2.2"/><path d="M6 23 Q12 16 20 23" fill="none" stroke="#fff" stroke-width="2.4"/><path d="M21 2 Q22 6 26 7 Q22 8 21 12 Q20 8 16 7 Q20 6 21 2Z" fill="#fff"/></svg>
<svg class="a" style="left:1702px;top:895px" width="20" height="26" viewBox="0 0 20 26"><circle cx="10" cy="4" r="3.3" fill="#fff"/><circle cx="10" cy="12.5" r="3.3" fill="#fff"/><circle cx="10" cy="21" r="3.3" fill="#fff"/></svg>
<div class="nm" style="left:1558px;top:941.0px">Martin Kam</div>
<div class="a" style="left:1664px;top:945px;font-size:16.6px;color:#d5d7d9;white-space:nowrap;line-height:20px">More options</div>


<!-- BOTTOM BAR -->
<div class="a" style="left:30px;top:1016.5px;font-size:20px;font-weight:700;color:#fff;white-space:nowrap;line-height:22px;transform:scaleX(0.97);transform-origin:0 0">8:51 PM</div>
<div class="a" style="left:117px;top:1019px;width:1px;height:20px;background:#e8eaed"></div>
<div class="a" style="left:133px;top:1017px;font-size:18.5px;font-weight:700;color:#fff;white-space:nowrap;line-height:22px">IEEE EMBS SEKU &amp; KU Joint Virtual Symposium...</div>


<!-- controls -->
<div class="a" style="left:608px;top:999px;width:110px;height:60px;border-radius:30px;background:#2a2b2e"></div>
<div class="a" style="left:658px;top:999px;width:60px;height:60px;border-radius:50%;background:#35363a"></div>
<svg class="a" style="left:628px;top:1022px" width="18" height="12" viewBox="0 0 18 12"><path d="M3 9 L9 3.5 L15 9" fill="none" stroke="#8e918f" stroke-width="1.6"/></svg>
<svg class="a" style="left:673px;top:1014px" width="30" height="30" viewBox="0 0 24 24"><path fill="#e3e3e3" d="M12 14c1.66 0 3-1.34 3-3V5c0-1.66-1.34-3-3-3S9 3.34 9 5v6c0 1.66 1.34 3 3 3zm5.3-3c0 3-2.54 5.1-5.3 5.1S6.7 14 6.7 11H5c0 3.41 2.72 6.23 6 6.72V21h2v-3.28c3.28-.48 6-3.3 6-6.72h-1.7z"/></svg>

<div class="a" style="left:728px;top:999px;width:110px;height:60px;border-radius:22px;background:#601410"></div>
<div class="a" style="left:778px;top:999px;width:60px;height:60px;border-radius:20px;background:#c99c99"></div>
<svg class="a" style="left:748px;top:1022px" width="18" height="12" viewBox="0 0 18 12"><path d="M3 9 L9 3.5 L15 9" fill="none" stroke="#f9dedc" stroke-width="1.8"/></svg>
<svg class="a" style="left:793px;top:1014px" width="30" height="30" viewBox="0 0 24 24"><path fill="#6b3533" d="M9.56 8l-2-2-4.15-4.14L2 3.27 4.73 6H4c-.55 0-1 .45-1 1v10c0 .55.45 1 1 1h12c.21 0 .39-.08.55-.18L19.73 21l1.41-1.41-8.86-8.860L9.56 8zM5 16V8h1.73l8 8H5zm10-8v2.61l6 6V6.5l-4 4V7c0-.55-.45-1-1-1h-5.61l2 2H15z"/></svg>
<div class="a" style="left:817.5px;top:994px;width:26px;height:26px;border-radius:50%;background:#fdd663"></div>
<div class="a" style="left:829.5px;top:1001px;width:2px;height:8px;background:#3a2a10"></div>
<div class="a" style="left:829.5px;top:1011px;width:2px;height:2px;background:#3a2a10"></div>

<div class="a" style="left:848px;top:999px;width:70px;height:60px;border-radius:30px;background:#35363a"></div>
<svg class="a" style="left:869px;top:1017px" width="28" height="24" viewBox="0 0 28 24"><rect x="2" y="2" width="22" height="18" rx="1" fill="none" stroke="#e3e3e3" stroke-width="2.4"/><path d="M11.5 8.5 H7 V14 H11.5 M18.5 8.5 H14 V14 H18.5" fill="none" stroke="#e3e3e3" stroke-width="2.2"/></svg>

<div class="a" style="left:928px;top:999px;width:70px;height:60px;border-radius:30px;background:#35363a"></div>
<svg class="a" style="left:949px;top:1015px" width="28" height="28" viewBox="0 0 28 28"><circle cx="14" cy="14" r="11.5" fill="none" stroke="#e3e3e3" stroke-width="2.4"/><circle cx="10" cy="11" r="1.8" fill="#e3e3e3"/><circle cx="18" cy="11" r="1.8" fill="#e3e3e3"/><path d="M7.5 16 H20.5 Q19.5 21 14 21 Q8.5 21 7.5 16Z" fill="#e3e3e3"/></svg>

<div class="a" style="left:1008px;top:999px;width:70px;height:60px;border-radius:30px;background:#35363a"></div>
<svg class="a" style="left:1028px;top:1017px" width="30" height="24" viewBox="0 0 30 24"><rect x="2" y="2" width="26" height="19.5" rx="1" fill="none" stroke="#e3e3e3" stroke-width="2.4"/><path d="M15 7.5 L19.5 12 H17 V15.5 H13 V12 H10.5Z" fill="#e3e3e3"/></svg>

<div class="a" style="left:1088px;top:999px;width:70px;height:60px;border-radius:30px;background:#35363a"></div>
<svg class="a" style="left:1109px;top:1013px" width="28" height="32" viewBox="0 0 28 32"><path d="M7 18 V9 Q7 7 8.5 7 Q10 7 10 9 V5 Q10 3 11.5 3 Q13 3 13 5 V4 Q13 2 14.5 2 Q16 2 16 4 V5 Q16 3.5 17.5 3.5 Q19 3.5 19 5.5 V8 Q19 6.5 20.5 6.5 Q22 6.5 22 8.5 V20 Q22 30 14 30 Q9 30 6 25 L2.5 19 Q2 17 3.5 16.5 Q5 16 6 17.5Z M10 9 V15 M13 5 V15 M16 4 V15 M19 8 V15" fill="none" stroke="#e3e3e3" stroke-width="2"/></svg>

<div class="a" style="left:1168px;top:999px;width:45px;height:60px;border-radius:22px;background:#35363a"></div>
<svg class="a" style="left:1184px;top:1017px" width="12" height="24" viewBox="0 0 12 24"><circle cx="6" cy="4" r="2.8" fill="#e3e3e3"/><circle cx="6" cy="12" r="2.8" fill="#e3e3e3"/><circle cx="6" cy="19.5" r="2.8" fill="#e3e3e3"/></svg>

<div class="a" style="left:1223px;top:999px;width:90px;height:60px;border-radius:30px;background:#dc362e"></div>
<svg class="a" style="left:1252px;top:1019px" width="32" height="20" viewBox="0 0 32 20"><path d="M3 13.5 L6.5 16.5 L9.5 12.5 L9 9.5 Q16 7 23 9.5 L22.5 12.5 L25.5 16.5 L29 13.5 Q29 10 26.5 8 Q16 2 5.5 8 Q3 10 3 13.5Z" fill="none" stroke="#fff" stroke-width="2.3" stroke-linejoin="round"/></svg>

<!-- right icons -->
<svg class="a" style="left:1621px;top:1015px" width="28" height="28" viewBox="0 0 28 28"><circle cx="14" cy="14" r="11.5" fill="none" stroke="#fff" stroke-width="2.4"/><rect x="12.6" y="12" width="2.8" height="8" fill="#fff"/><circle cx="14" cy="8.5" r="1.6" fill="#fff"/></svg>
<svg class="a" style="left:1679px;top:1016px" width="32" height="26" viewBox="0 0 32 26"><circle cx="11" cy="8" r="4" fill="none" stroke="#fff" stroke-width="2.5"/><path d="M2 23 V21 Q2 15.5 11 15.5 Q20 15.5 20 21 V23Z" fill="none" stroke="#fff" stroke-width="2.5"/><path d="M17 4 Q21 3 22 7.5 Q22 11.5 18.5 12.5" fill="none" stroke="#fff" stroke-width="2.5"/><path d="M21 16 Q29 16 29.5 21 V23.5 H24" fill="none" stroke="#fff" stroke-width="2.5"/></svg>
<div class="a" style="left:1696px;top:988px;width:36px;height:25px;border-radius:12.5px;background:#5f6368;color:#fff;font-weight:700;font-size:13.5px;line-height:25px;text-align:center">54</div>
<svg class="a" style="left:1740px;top:1015px" width="30" height="30" viewBox="0 0 30 30"><path d="M3 3 H27 V21 H7.5 L3 26Z" fill="none" stroke="#fff" stroke-width="2.4" stroke-linejoin="round"/><rect x="7" y="7.5" width="16" height="2.2" fill="#fff"/><rect x="7" y="11" width="16" height="2.2" fill="#fff"/><rect x="7" y="14.5" width="10" height="2.2" fill="#fff"/></svg>
<svg class="a" style="left:1801px;top:1015px" width="28" height="28" viewBox="0 0 28 28"><path d="M14 2 L20 11 H8Z" fill="none" stroke="#fff" stroke-width="2.4" stroke-linejoin="round"/><rect x="3" y="16" width="8" height="8.5" fill="none" stroke="#fff" stroke-width="2.4"/><circle cx="21" cy="20.5" r="4.2" fill="none" stroke="#fff" stroke-width="2.4"/></svg>
<svg class="a" style="left:1862px;top:1014px" width="30" height="30" viewBox="0 0 30 30"><path d="M7 12 V8.5 Q7 2.5 13 2.5 Q19 2.5 19 8.5 V12" fill="none" stroke="#fff" stroke-width="2.4"/><path d="M14 27 H3.5 V12 H21 V15" fill="none" stroke="#fff" stroke-width="2.4"/><circle cx="22.5" cy="22" r="6.5" fill="#fff"/><circle cx="22.5" cy="20" r="1.8" fill="#202124"/><path d="M19.5 25.5 Q22.5 22.5 25.5 25.5Z" fill="#202124"/></svg>
<div class="a" style="left:45px;top:1077px;width:323px;height:3px;background:#3c4043"></div>
<div class="a" style="left:831px;top:1077px;width:45px;height:3px;background:#3c4043"></div>

</body></html>
